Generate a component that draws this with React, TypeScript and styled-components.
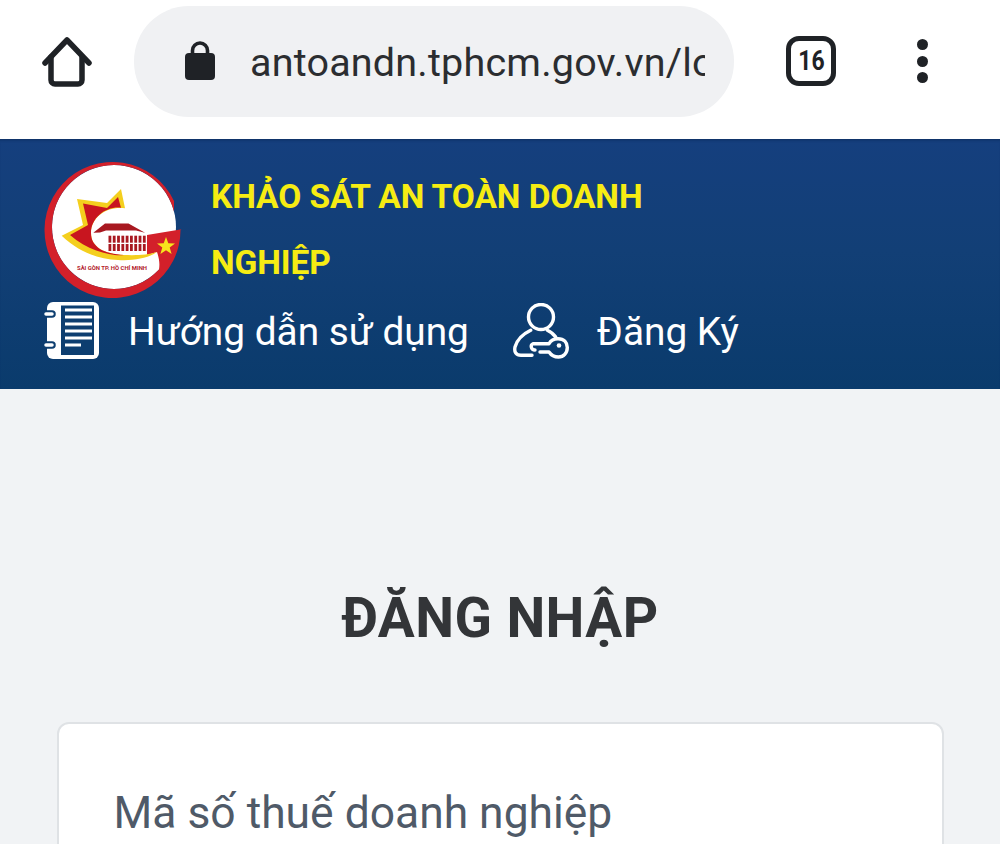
import React from "react";
import styled, { createGlobalStyle } from "styled-components";

const Global = createGlobalStyle`
  html, body { margin: 0; padding: 0; height: 844px; overflow: hidden; background: #f1f3f5; }
  * { box-sizing: border-box; }
  body { font-family: Roboto, "Noto Sans", sans-serif; }
`;

const Page = styled.div`
  width: 1000px;
  height: 844px;
  overflow: hidden;
  background: #f1f3f5;
  display: flex;
  flex-direction: column;
`;

const BrowserBar = styled.div`
  height: 139px;
  background: #fff;
  display: flex;
  align-items: flex-start;
  padding: 6px 0 0 42px;
  flex: none;
`;

const HomeBox = styled.div`
  width: 50px;
  height: 111px;
  display: flex;
  align-items: center;
  margin-right: 42px;
`;

const UrlPill = styled.div`
  width: 600px;
  height: 111px;
  border-radius: 55px;
  background: #f0f1f3;
  display: flex;
  align-items: center;
  padding-left: 51px;
  margin-right: 52px;
`;

const LockIcon = styled.svg`
  flex: none;
  margin-bottom: 2px;
`;

const UrlText = styled.div`
  margin: 2px 0 0 35px;
  width: 455px;
  overflow: hidden;
  white-space: nowrap;
  font-size: 39.5px;
  letter-spacing: 0.2px;
  color: #2b2d30;
`;

const TabCount = styled.div`
  width: 50px;
  height: 50px;
  margin-top: 30px;
  border: 5px solid #1f2226;
  border-radius: 13px;
  display: flex;
  align-items: center;
  justify-content: center;
  color: #1f2226;
`;

const TabDigits = styled.span`
  font-size: 27px;
  font-weight: 700;
  transform: scaleX(0.85);
`;

const Dots = styled.div`
  margin: 33px 0 0 81px;
  display: flex;
  flex-direction: column;
  gap: 5.5px;
`;

const Dot = styled.span`
  width: 11px;
  height: 11px;
  border-radius: 50%;
  background: #1f2226;
`;

const Header = styled.header`
  height: 250px;
  flex: none;
  padding: 22px 0 0 44px;
  background: linear-gradient(180deg, #153f7e 0%, #123f76 45%, #0a3b6c 100%);
  box-shadow: inset 0 3px 3px -2px #0d2f60;
`;

const Brand = styled.div`
  display: flex;
  align-items: flex-start;
  height: 138px;
`;

const BrandTitle = styled.h1`
  margin: 3px 0 0 29px;
  width: 470px;
  font-size: 33.5px;
  line-height: 66px;
  font-weight: 700;
  color: #f6ec13;
  letter-spacing: -0.1px;
`;

const Menu = styled.nav`
  display: flex;
  align-items: center;
  height: 62px;
  margin-top: 1px;
`;

const MenuLink = styled.a<{ $after?: number }>`
  display: flex;
  align-items: center;
  gap: 28px;
  margin-right: ${(p) => p.$after ?? 0}px;
  color: #fff;
  font-size: 38.8px;
  white-space: nowrap;
`;

const Main = styled.main`
  flex: 1;
  padding: 0 56.5px;
  display: flex;
  flex-direction: column;
  min-height: 0;
`;

const Title = styled.h2`
  margin: 196px 0 0;
  text-align: center;
  font-size: 55px;
  line-height: 66px;
  font-weight: 700;
  letter-spacing: 0.4px;
  color: #333538;
`;

const Card = styled.section`
  margin-top: 71px;
  height: 300px;
  flex: none;
  background: #fff;
  border: 2px solid #dfe2e5;
  border-radius: 12px;
  padding: 64px 55px 0;
`;

const Label = styled.label`
  display: block;
  font-size: 44.4px;
  line-height: 50px;
  color: #4f5a68;
`;

const Logo = () => (
  <svg width="138" height="138" viewBox="0 0 138 138" style={{ flex: "none" }}>
    <circle cx="70" cy="66" r="62" fill="#fff" />
    <path
      d="M130 40A68 68 0 1 0 136.500 68L137.700 68.300L103 74V94L113 91C115 97 116 102 115 108.600A62 62 0 1 1 130 50.400Z"
      fill="#d3202a"
    />
    <path d="M122 76l2.300 6.300 6.700.2-5.300 4.100 1.900 6.400-5.600-3.800-5.600 3.800 1.900-6.400-5.300-4.100 6.700-.2z" fill="#f7e51c" />
    <path
      d="M17.700 74.700L39 64L33 38L63 42L77 28L81 47.300C63 45 47 56 47 72C47 86 60 93 80 94C92 94.500 104 94 113 91C104 97 90 100 74 99C55 98 36 92 17.700 74.700Z"
      fill="#f4cf1e"
    />
    <path
      d="M26 74L44 64L39 42.500L63 47L74 36L77 46.800C63 45 47 56 47 72C47 86 60 93 80 94C68 95.500 44 90 26 74Z"
      fill="#c8151f"
    />
    <path d="M49.300 71.700L61 62.500H84.500L101 71.700L92 69.500H62L56 71.500Z" fill="#a81820" />
    {[0, 1, 2, 3, 4, 5, 6, 7, 8].map((i) => (
      <g key={i} fill="#a81820">
        <rect x={64.5 + i * 4.3} y="74.700" width="2.800" height="7" />
        <rect x={64.5 + i * 4.3} y="83" width="2.800" height="7" />
      </g>
    ))}
    <text
      x="68"
      y="108.500"
      textAnchor="middle"
      fontSize="5.400"
      fontWeight="700"
      fontFamily="Roboto, sans-serif"
      fill="#b3202a"
      textLength="70"
      lengthAdjust="spacingAndGlyphs"
    >
      SÀI GÒN TP. HỒ CHÍ MINH
    </text>
  </svg>
);

const NotebookIcon = () => (
  <svg width="56" height="58" viewBox="0 0 56 58" style={{ flex: "none" }}>
    <rect x="3" y="0" width="52" height="57" rx="6" fill="#fff" />
    <rect x="17" y="3.500" width="33" height="49.500" fill="#0d3e70" />
    <path d="M2 12h6M2 43h6" stroke="#0d3e70" strokeWidth="7.500" strokeLinecap="round" />
    <path d="M2 12h6M2 43h6" stroke="#fff" strokeWidth="3.500" strokeLinecap="round" />
    <path d="M21 8h27M21 15h27M21 22h27M21 29h27M21 36h27M21 43h16" stroke="#fff" strokeWidth="3" />
  </svg>
);

const UserKeyIcon = () => (
  <svg width="56" height="56" viewBox="0 0 56 56" fill="none" stroke="#fff" strokeWidth="3.400" strokeLinecap="round" strokeLinejoin="round" style={{ flex: "none" }}>
    <circle cx="28" cy="14" r="12.500" />
    <path d="M17.700 27.300C10 31 4 37 2 44C1 49 3 52.300 8 52.300H19" />
    <path d="M34.300 27.300C38 29 41 31.500 42.700 34" />
    <path d="M22 47C18 47 17 42 20 40.700H36C38 37 41 35.700 45 35.700C51 35.700 54.300 39.500 54.300 44.500C54.300 50 50.500 54 45.500 54C41 54 38 52 36 49H27" />
    <circle cx="46" cy="42.500" r="2.300" fill="#fff" stroke="none" />
  </svg>
);

export default function App() {
  return (
    <Page>
      <Global />
      <BrowserBar>
        <HomeBox>
          <svg width="50" height="50" viewBox="0 0 50 50" fill="none" stroke="#1f2226" strokeWidth="5.500" strokeLinecap="round" strokeLinejoin="round">
            <path d="M3 26 25 3l22 23" />
            <path d="M9 20v23a4 4 0 0 0 4 4h23a4 4 0 0 0 4-4V20" />
          </svg>
        </HomeBox>
        <UrlPill>
          <LockIcon width="30" height="39" viewBox="0 0 30 39">
            <path d="M7.500 16V9.500a7.500 7.500 0 0 1 15 0V16" fill="none" stroke="#1f2226" strokeWidth="3.600" />
            <rect x="0" y="12" width="30" height="27" rx="4" fill="#1f2226" />
          </LockIcon>
          <UrlText>antoandn.tphcm.gov.vn/login</UrlText>
        </UrlPill>
        <TabCount>
          <TabDigits>16</TabDigits>
        </TabCount>
        <Dots>
          <Dot />
          <Dot />
          <Dot />
        </Dots>
      </BrowserBar>
      <Header>
        <Brand>
          <Logo />
          <BrandTitle>KHẢO SÁT AN TOÀN DOANH NGHIỆP</BrandTitle>
        </Brand>
        <Menu>
          <MenuLink $after={44}>
            <NotebookIcon />
            Hướng dẫn sử dụng
          </MenuLink>
          <MenuLink>
            <UserKeyIcon />
            Đăng Ký
          </MenuLink>
        </Menu>
      </Header>
      <Main>
        <Title>ĐĂNG NHẬP</Title>
        <Card>
          <Label>Mã số thuế doanh nghiệp</Label>
        </Card>
      </Main>
    </Page>
  );
}
